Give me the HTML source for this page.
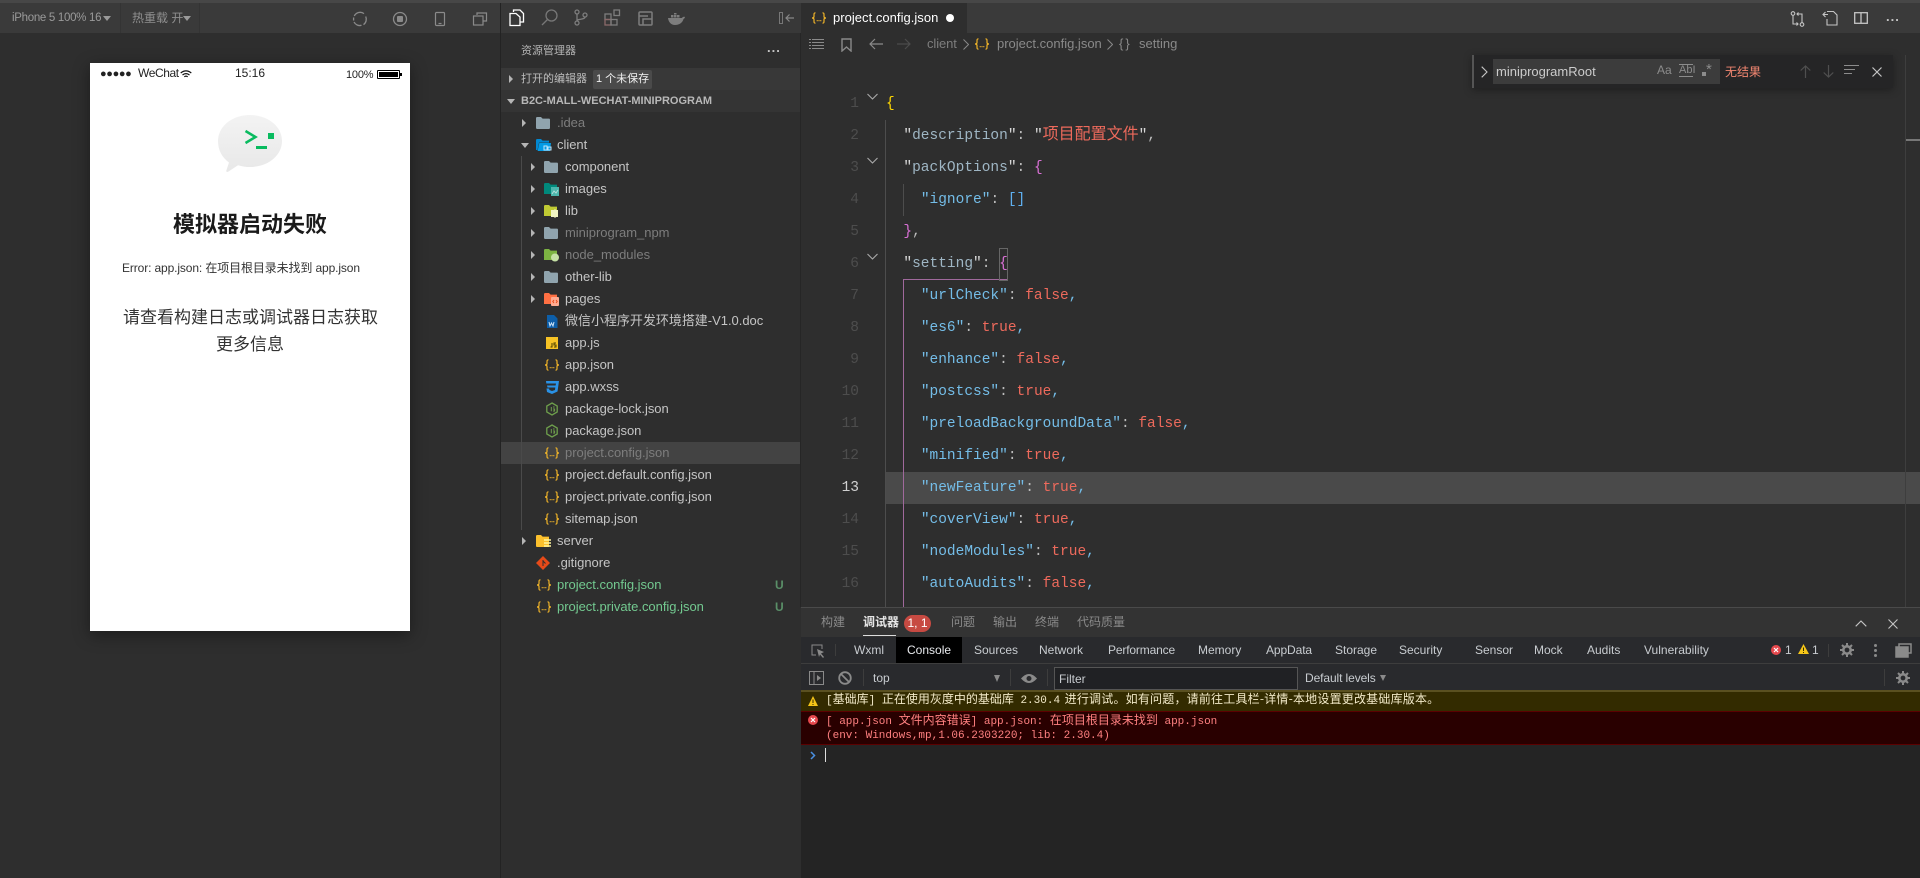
<!DOCTYPE html>
<html><head><meta charset="utf-8"><style>
html,body{margin:0;padding:0;width:1920px;height:878px;overflow:hidden;background:#2e2e2e}
body{position:relative;font-family:"Liberation Sans","Noto Sans CJK SC",sans-serif;font-size:13px;color:#c5c5c5}
div,span.t,svg.p{position:absolute}
.t{position:absolute;white-space:nowrap}
.r{position:absolute;left:501px;width:299px;height:22px;line-height:22px}
.r span{position:absolute;white-space:nowrap;top:0;letter-spacing:-.02px}
.r svg{position:absolute;top:5px}
.r .a{position:absolute;top:7px;width:0;height:0;border-left:4px solid #b5b5b5;border-top:4px solid transparent;border-bottom:4px solid transparent}
.l1 .a{left:21px}.l1 svg{left:35px}.l1 span{left:56px}
.l2 .a{left:30px}.l2 svg{left:43px}.l2 span{left:64px}
.dim{color:#7d7d7d}
.g{color:#73c990}
.ln{position:absolute;left:810px;width:49px;text-align:right;height:32px;font:14.5px/32px "Liberation Mono",monospace;color:#4d4d4d}
.c{position:absolute;left:886px;height:32px;white-space:pre;font:14.5px/32px "Liberation Mono","Noto Sans CJK SC",monospace;color:#bdbdbd}
.k{color:#74bde8}.k1{color:#9fb6c4}.v{color:#ee6a5c}.q{color:#d8d8d8}
.dt{position:absolute;top:637px;height:26px;line-height:27px;font-size:12px;color:#c8ccd0;white-space:nowrap}
.pt{position:absolute;top:607px;height:30px;line-height:30px;font-size:12px;color:#8a8a8a;white-space:nowrap}
.con{position:absolute;left:826px;white-space:pre;font:11px/13px "Liberation Mono","Noto Sans CJK SC",monospace}
.con b{font-weight:400;font-size:12px;line-height:0;font-family:"Noto Sans CJK SC",sans-serif}
svg{display:block}
</style></head><body>
<svg width="0" height="0" style="position:absolute"><defs>
<symbol id="j" viewBox="0 0 16 12"><g fill="none" stroke="#f0b429" stroke-width="1.2"><path d="M4.5 .8C3 .8 3 1.6 3 3v1.5C3 5.6 2.4 6 1 6c1.4 0 2 .4 2 1.5V9c0 1.4 0 2.2 1.5 2.2"/><path d="M11.5 .8C13 .8 13 1.6 13 3v1.5c0 1.1.6 1.5 2 1.5-1.4 0-2 .4-2 1.5V9c0 1.4 0 2.2-1.5 2.2"/></g><path fill="#f0b429" d="M5.7 8h1v1.2h-1zM7.5 8h1v1.2h-1zM9.3 8h1v1.2h-1z"/></symbol>
<symbol id="f" viewBox="0 0 14 12"><path d="M0 1.2Q0 0 1.2 0H5l1.6 1.6H13Q14 1.6 14 2.8V10.8Q14 12 13 12H1Q0 12 0 10.8z"/></symbol>
<symbol id="n" viewBox="0 0 14 14"><path d="M7 1l5.2 3v6L7 13 1.8 10V4z" fill="none" stroke="#6e9f4c" stroke-width="1.3"/><path d="M6.3 5v4.2M8 5h1.6M8 7h1.6v2H8" fill="none" stroke="#6e9f4c"/></symbol>
</defs></svg>

<!-- top strip -->
<div style="left:0;top:0;width:1920px;height:3px;background:#474747"></div>
<!-- simulator toolbar -->
<div style="left:0;top:3px;width:500px;height:30px;background:#3a3a3a"></div>
<div style="left:120px;top:3px;width:1px;height:30px;background:#343434"></div>
<div style="left:199px;top:3px;width:1px;height:30px;background:#343434"></div>
<span class="t" style="left:12px;top:9px;font-size:11.5px;line-height:18px;color:#9a9a9a;letter-spacing:-.3px">iPhone 5 100% 16</span>
<div style="left:103px;top:16px;border-top:5px solid #999;border-left:4px solid transparent;border-right:4px solid transparent"></div>
<span class="t" style="left:132px;top:9px;font-size:12px;line-height:18px;color:#8f8f8f">热重载 开</span>
<div style="left:183px;top:16px;border-top:5px solid #999;border-left:4px solid transparent;border-right:4px solid transparent"></div>
<svg class="p" style="left:352px;top:11px" width="16" height="16" viewBox="0 0 16 16" fill="none" stroke="#8a8a8a" stroke-width="1.3"><path d="M2.3 5A6.5 6.5 0 0 1 12 2.6M13.7 5.5A6.5 6.5 0 0 1 11.5 13.6M9.5 14.3A6.5 6.5 0 0 1 2 11M1.6 9.5V6.5"/></svg>
<svg class="p" style="left:392px;top:11px" width="16" height="16" viewBox="0 0 16 16"><circle cx="8" cy="8" r="6.5" fill="none" stroke="#8a8a8a" stroke-width="1.3"/><rect x="5" y="5" width="6" height="6" rx="1" fill="#8a8a8a"/></svg>
<svg class="p" style="left:434px;top:11px" width="12" height="16" viewBox="0 0 12 16" fill="none" stroke="#8a8a8a" stroke-width="1.2"><rect x="1.5" y="1.5" width="9" height="13" rx="1"/><path d="M4.5 12.5h3"/></svg>
<svg class="p" style="left:472px;top:11px" width="16" height="16" viewBox="0 0 16 16" fill="none" stroke="#8a8a8a" stroke-width="1.2"><path d="M5 4V2h9.500v8H11"/><rect x="1.500" y="5" width="9.500" height="9"/></svg>

<!-- phone -->
<div style="left:90px;top:63px;width:320px;height:568px;background:#fff;box-shadow:0 4px 16px rgba(0,0,0,.4)"></div>
<span class="t" style="left:100px;top:68px;font-size:11px;line-height:12px;color:#222;letter-spacing:-.35px">●●●●●</span>
<span class="t" style="left:138px;top:66px;font-size:12px;line-height:15px;color:#222;letter-spacing:-.4px">WeChat</span>
<svg class="p" style="left:180px;top:70px" width="12" height="9" viewBox="0 0 12 9" fill="none" stroke="#111" stroke-width="1.200"><path d="M.7 3Q6-1.200 11.300 3M2.500 5Q6 2.300 9.500 5M4.300 6.800Q6 5.500 7.700 6.800"/></svg>
<span class="t" style="left:235px;top:66px;font-size:12px;line-height:15px;color:#222">15:16</span>
<span class="t" style="left:346px;top:68px;font-size:11px;line-height:15px;color:#222;letter-spacing:-.2px">100%</span>
<div style="left:377px;top:70px;width:21px;height:7px;border:1px solid #000;border-radius:1px;padding:0"></div>
<div style="left:379px;top:72px;width:19px;height:5px;background:#000"></div>
<div style="left:400px;top:73px;width:2px;height:3px;background:#000"></div>
<svg class="p" style="left:218px;top:115px" width="64" height="57" viewBox="0 0 64 57"><defs><linearGradient id="bg" x1="0" y1="0" x2="0" y2="1"><stop offset="0" stop-color="#f3f3f3"/><stop offset="1" stop-color="#e8e8e8"/></linearGradient></defs><path d="M32 0C50 0 64 11.500 64 26S50 52 32 52c-4 0-8-.6-12-1.800L10.500 56.500c-1.500 1-2.800.3-2-1.500L11 47.500C4 42.500 0 35 0 26 0 11.500 14 0 32 0z" fill="url(#bg)"/><path d="M27.500 16l10 6-10 6" fill="none" stroke="#09bb5f" stroke-width="2.500"/><rect x="38" y="31" width="11" height="3" fill="#09bb5f"/><rect x="50" y="18" width="6" height="6" fill="#09bb5f"/></svg>
<span class="t" style="left:173px;top:210px;font-size:22px;line-height:30px;font-weight:700;color:#1a1a1a">模拟器启动失败</span>
<span class="t" style="left:122px;top:259px;font-size:12px;line-height:18px;color:#333;letter-spacing:-.12px">Error: app.json: 在项目根目录未找到 app.json</span>
<span class="t" style="left:123px;top:304px;font-size:17px;line-height:27px;color:#333">请查看构建日志或调试器日志获取</span>
<span class="t" style="left:216px;top:331px;font-size:17px;line-height:27px;color:#333">更多信息</span>

<!-- dividers -->
<div style="left:500px;top:3px;width:1px;height:875px;background:#232323"></div>
<div style="left:800px;top:33px;width:1px;height:574px;background:#262626"></div>

<!-- activity bar -->
<div style="left:501px;top:3px;width:300px;height:30px;background:#383838"></div>
<svg class="p" style="left:509px;top:9px" width="16" height="18" viewBox="0 0 16 18" fill="none" stroke="#fff" stroke-width="1.300"><path d="M4.500 3V1h6.500l3.500 3.500V13h-3.500"/><path d="M1 4.500h6l4 3.500V16.500H1z"/></svg>
<svg class="p" style="left:541px;top:9px" width="17" height="17" viewBox="0 0 17 17" fill="none" stroke="#777" stroke-width="1.300"><circle cx="10.500" cy="6.500" r="5.500"/><path d="M6.500 10.500L1 16"/></svg>
<svg class="p" style="left:574px;top:9px" width="14" height="17" viewBox="0 0 14 17" fill="none" stroke="#7d7d7d" stroke-width="1.300"><circle cx="3" cy="3" r="2"/><circle cx="3" cy="14" r="2"/><circle cx="11" cy="6" r="2"/><path d="M3 5v7M11 8c0 3-8 1.500-8 4"/></svg>
<svg class="p" style="left:604px;top:9px" width="17" height="17" viewBox="0 0 17 17" fill="none" stroke="#7d7d7d" stroke-width="1.300"><rect x="1" y="5" width="6" height="5.500"/><rect x="1" y="10.500" width="6" height="5.500" stroke="#8a6a6a"/><rect x="7" y="10.500" width="6" height="5.500"/><rect x="10" y="1" width="5.500" height="5.500"/></svg>
<svg class="p" style="left:638px;top:11px" width="15" height="15" viewBox="0 0 15 15" fill="none" stroke="#7d7d7d" stroke-width="1.500"><rect x="1" y="1" width="13" height="13" rx="1"/><path d="M1 5h9M14 8H5v6"/></svg>
<svg class="p" style="left:668px;top:13px" width="18" height="12" viewBox="0 0 18 12"><path fill="#7d7d7d" d="M0 5h14c.5-1 1.500-1.500 3-1-.2 1-.7 1.500-1.500 2C14.500 10 11 12 7 12 3 12 .5 9 0 5z"/><path fill="#7d7d7d" d="M3 2h2.500v2.500H3zM6 2h2.500v2.500H6zM6-.5h2.500V1.500H6zM9 2h2.500v2.500H9z"/></svg>
<div style="left:779px;top:12px;width:4px;height:12px;border:1px solid #777;box-sizing:border-box"></div>
<svg class="p" style="left:785px;top:13px" width="9" height="10" viewBox="0 0 9 10" fill="none" stroke="#888" stroke-width="1.200"><path d="M9 5H1M4.500 1.500L1 5l3.500 3.500"/></svg>

<!-- sidebar header -->
<span class="t" style="left:521px;top:42px;font-size:11px;line-height:18px;color:#b5b5b5">资源管理器</span>
<span class="t" style="left:767px;top:39px;font-size:13px;line-height:18px;color:#c5c5c5;letter-spacing:1px;font-weight:700">...</span>
<div style="left:501px;top:68px;width:299px;height:22px;background:#383838"></div>
<div style="left:501px;top:90px;width:299px;height:22px;background:#343434"></div>
<div class="a" style="left:509px;top:75px;width:0;height:0;border-left:4px solid #b5b5b5;border-top:4px solid transparent;border-bottom:4px solid transparent"></div>
<span class="t" style="left:521px;top:70px;font-size:11px;line-height:18px;color:#bdbdbd">打开的编辑器</span>
<div style="left:593px;top:70px;width:59px;height:19px;background:#4a4a4a;border-radius:2px"></div>
<span class="t" style="left:596px;top:70px;font-size:11px;line-height:19px;color:#f0f0f0">1 个未保存</span>
<div style="left:507px;top:99px;width:0;height:0;border-top:5px solid #b5b5b5;border-left:4px solid transparent;border-right:4px solid transparent"></div>
<span class="t" style="left:521px;top:92px;font-size:11px;line-height:18px;color:#b8b8b8;font-weight:700">B2C-MALL-WECHAT-MINIPROGRAM</span>

<!-- tree -->
<div style="left:501px;top:442px;width:299px;height:22px;background:#434343"></div>
<div style="left:521px;top:156px;width:1px;height:374px;background:#4a4a4a"></div>

<div class="r l1" style="top:112px"><i class="a"></i><svg width="14" height="12" fill="#90a4ae"><use href="#f"/></svg><span class="dim">.idea</span></div>
<div class="r l1" style="top:134px"><i class="a" style="border:0;border-top:5px solid #b5b5b5;border-left:4px solid transparent;border-right:4px solid transparent;top:9px;left:20px"></i><svg width="16" height="13" viewBox="0 0 16 13"><path fill="#0288d1" d="M0 1.200Q0 0 1.200 0H5l1.600 1.600H13v2H3L1.500 11H0z"/><path fill="#039be5" d="M3.300 4H15l-1 8H1.600z"/><rect x="8" y="7" width="3" height="4" fill="none" stroke="#bfe6fb"/><rect x="12" y="8" width="3" height="3" fill="none" stroke="#bfe6fb"/></svg><span>client</span></div>
<div class="r l2" style="top:156px"><i class="a"></i><svg width="14" height="12" fill="#90a4ae"><use href="#f"/></svg><span>component</span></div>
<div class="r l2" style="top:178px"><i class="a"></i><svg width="15" height="13" viewBox="0 0 15 13"><g fill="#00897b"><path d="M0 1.200Q0 0 1.200 0H5l1.600 1.600H13V11H0z"/></g><rect x="7" y="4" width="8" height="9" fill="#4db6ac"/><path d="M8 11l2-3 2 2 2-3" stroke="#b2dfdb" fill="none"/></svg><span>images</span></div>
<div class="r l2" style="top:200px"><i class="a"></i><svg width="15" height="13" viewBox="0 0 15 13"><path fill="#c0ca33" d="M0 1.200Q0 0 1.200 0H5l1.600 1.600H13V11H0z"/><path fill="#f0f4c3" d="M7 5h3l1-1 1 1h2v7h-2l-1 1-1-1H7z"/></svg><span>lib</span></div>
<div class="r l2" style="top:222px"><i class="a"></i><svg width="14" height="12" fill="#90a4ae"><use href="#f"/></svg><span class="dim">miniprogram_npm</span></div>
<div class="r l2" style="top:244px"><i class="a"></i><svg width="15" height="13" viewBox="0 0 15 13"><path fill="#7cb342" d="M0 1.200Q0 0 1.200 0H5l1.600 1.600H13V11H0z"/><circle cx="11" cy="8.500" r="4" fill="#c5e1a5"/></svg><span class="dim">node_modules</span></div>
<div class="r l2" style="top:266px"><i class="a"></i><svg width="14" height="12" fill="#90a4ae"><use href="#f"/></svg><span>other-lib</span></div>
<div class="r l2" style="top:288px"><i class="a"></i><svg width="15" height="13" viewBox="0 0 15 13"><path fill="#ff7043" d="M0 1.200Q0 0 1.200 0H5l1.600 1.600H13V11H0z"/><rect x="7" y="4" width="8" height="9" rx="1" fill="#ffab91"/><path d="M10 7L8.800 8.500 10 10M12 7l1.200 1.500L12 10" stroke="#e64a19" fill="none"/></svg><span>pages</span></div>
<div class="r l2" style="top:310px"><svg width="12" height="13" viewBox="0 0 12 13" style="left:45px"><path fill="#0d5ea8" d="M1 0h7l3.500 3.500V13H1z"/><path d="M3 7l1 4 1.500-3L7 11l1-4" stroke="#cfe4f7" fill="none"/></svg><span>微信小程序开发环境搭建-V1.0.doc</span></div>
<div class="r l2" style="top:332px"><svg width="12" height="12" viewBox="0 0 12 12" style="left:45px"><rect width="12" height="12" fill="#f7c325"/><path d="M6 6v4H4.500M10 6H8v2h2v2H8" stroke="#4a3c00" fill="none"/></svg><span>app.js</span></div>
<div class="r l2" style="top:354px"><svg width="16" height="12" style="left:43px"><use href="#j"/></svg><span>app.json</span></div>
<div class="r l2" style="top:376px"><svg width="14" height="13" viewBox="0 0 14 13" style="left:44px"><path fill="#2a92e6" d="M1 0h13l-1.500 10.500L7 13l-5-2-.5-3.500h2.700l.2 1.500L7 10l3-1 .3-2.500H2.500L2 4.500h8.600L11 2.500H1.300z"/></svg><span>app.wxss</span></div>
<div class="r l2" style="top:398px"><svg width="14" height="14" style="left:44px;top:4px"><use href="#n"/></svg><span>package-lock.json</span></div>
<div class="r l2" style="top:420px"><svg width="14" height="14" style="left:44px;top:4px"><use href="#n"/></svg><span>package.json</span></div>
<div class="r l2" style="top:442px"><svg width="16" height="12" style="left:43px"><use href="#j"/></svg><span class="dim">project.config.json</span></div>
<div class="r l2" style="top:464px"><svg width="16" height="12" style="left:43px"><use href="#j"/></svg><span>project.default.config.json</span></div>
<div class="r l2" style="top:486px"><svg width="16" height="12" style="left:43px"><use href="#j"/></svg><span>project.private.config.json</span></div>
<div class="r l2" style="top:508px"><svg width="16" height="12" style="left:43px"><use href="#j"/></svg><span>sitemap.json</span></div>
<div class="r l1" style="top:530px"><i class="a"></i><svg width="15" height="12" viewBox="0 0 15 12"><path fill="#fbc02d" d="M0 1.200Q0 0 1.200 0H5l1.600 1.600H13V12H1Q0 12 0 11z"/><path d="M8 5h7M8 8h7M8 11h7" stroke="#fff59d" stroke-width="1.500"/></svg><span>server</span></div>
<div class="r l1" style="top:552px"><svg width="14" height="14" viewBox="0 0 14 14" style="top:4px"><path fill="#e64a19" d="M7 0l7 7-7 7-7-7z"/><path d="M7 4v6M7 5l2.500 2.500" stroke="#2e2e2e" fill="none"/></svg><span>.gitignore</span></div>
<div class="r l1" style="top:574px"><svg width="16" height="12" style="left:35px"><use href="#j"/></svg><span class="g">project.config.json</span><span style="left:274px;color:#5a8f68;font-weight:700;font-size:12px">U</span></div>
<div class="r l1" style="top:596px"><svg width="16" height="12" style="left:35px"><use href="#j"/></svg><span class="g">project.private.config.json</span><span style="left:274px;color:#5a8f68;font-weight:700;font-size:12px">U</span></div>

<!-- editor tab bar -->
<div style="left:801px;top:3px;width:1119px;height:30px;background:#3a3a3a"></div>
<div style="left:801px;top:3px;width:166px;height:30px;background:#2e2e2e"></div>
<svg class="p" style="left:811px;top:12px" width="16" height="12"><use href="#j"/></svg>
<span class="t" style="left:833px;top:9px;font-size:13px;line-height:18px;color:#fff;letter-spacing:.03px">project.config.json</span>
<div style="left:946px;top:14px;width:8px;height:8px;border-radius:50%;background:#fff"></div>
<svg class="p" style="left:1790px;top:11px" width="15" height="16" viewBox="0 0 15 16" fill="none" stroke="#c5c5c5" stroke-width="1.100"><circle cx="3" cy="2.500" r="1.800"/><circle cx="12" cy="13.500" r="1.800"/><path d="M3 4.500V13h5M6.500 11.500L8 13l-1.500 1.500M12 11.500V3H7M8.500 1.500L7 3l1.500 1.500"/></svg>
<svg class="p" style="left:1822px;top:10px" width="16" height="16" viewBox="0 0 16 16" fill="none" stroke="#c5c5c5" stroke-width="1.100"><path d="M5 1.500h6.500L15 5v10H5V9"/><path d="M1 4.500h5M3.500 2L1 4.500 3.500 7"/></svg>
<svg class="p" style="left:1854px;top:11px" width="14" height="14" viewBox="0 0 14 14" fill="none" stroke="#c5c5c5" stroke-width="1.300"><rect x=".7" y="1.700" width="12.600" height="10.600"/><path d="M7 1.700v10.600"/></svg>
<span class="t" style="left:1886px;top:8px;font-size:13px;line-height:18px;color:#c5c5c5;letter-spacing:1px;font-weight:700">...</span>

<!-- breadcrumb -->
<svg class="p" style="left:809px;top:39px" width="15" height="11" viewBox="0 0 15 11" stroke="#8a8a8a"><path d="M0 .5h2M3 .5h12M0 3.500h2M3 3.500h12M0 6.500h2M3 6.500h12M0 9.500h2M3 9.500h12"/></svg>
<svg class="p" style="left:841px;top:38px" width="11" height="14" viewBox="0 0 11 14" fill="none" stroke="#8a8a8a" stroke-width="1.400"><path d="M1 1h9v12L5.500 9 1 13z"/></svg>
<svg class="p" style="left:869px;top:38px" width="14" height="12" viewBox="0 0 14 12" fill="none" stroke="#8a8a8a" stroke-width="1.200"><path d="M14 6H1M6 1L1 6l5 5"/></svg>
<svg class="p" style="left:897px;top:38px" width="14" height="12" viewBox="0 0 14 12" fill="none" stroke="#4c4c4c" stroke-width="1.200"><path d="M0 6h13M8 1l5 5-5 5"/></svg>
<span class="t" style="left:927px;top:35px;font-size:13px;line-height:18px;color:#7d7d7d;letter-spacing:-.1px">client</span>
<svg class="p" style="left:963px;top:39px" width="6" height="11" fill="none" stroke="#888"><path d="M.5.500l5 5-5 5"/></svg>
<svg class="p" style="left:974px;top:38px" width="16" height="12"><use href="#j"/></svg>
<span class="t" style="left:997px;top:35px;font-size:13px;line-height:18px;color:#8a8a8a">project.config.json</span>
<svg class="p" style="left:1107px;top:39px" width="6" height="11" fill="none" stroke="#888"><path d="M.5.500l5 5-5 5"/></svg>
<span class="t" style="left:1119px;top:35px;font-size:13px;line-height:18px;color:#8a8a8a;letter-spacing:2px">{}</span>
<span class="t" style="left:1139px;top:35px;font-size:13px;line-height:18px;color:#8a8a8a">setting</span>

<!-- editor -->
<div style="left:885px;top:472px;width:1035px;height:32px;background:#4a4a4a"></div>
<div style="left:885px;top:120px;width:1px;height:487px;background:#4d4d4d"></div>
<div style="left:903px;top:184px;width:1px;height:32px;background:#4d4d4d"></div>
<div style="left:903px;top:279px;width:1px;height:328px;background:#a0699c"></div>
<div style="left:903px;top:279px;width:104px;height:1px;background:#a0699c"></div>
<div style="left:999px;top:248px;width:7px;height:31px;border:1px solid #666"></div>
<svg class="p" style="left:867px;top:93px" width="11" height="7" fill="none" stroke="#aaa" stroke-width="1.100"><path d="M.5 1L5.500 6l5-5"/></svg>
<svg class="p" style="left:867px;top:157px" width="11" height="7" fill="none" stroke="#aaa" stroke-width="1.100"><path d="M.5 1L5.500 6l5-5"/></svg>
<svg class="p" style="left:867px;top:253px" width="11" height="7" fill="none" stroke="#aaa" stroke-width="1.100"><path d="M.5 1L5.500 6l5-5"/></svg>

<div class="ln" style="top:88px">1</div><div class="ln" style="top:120px">2</div><div class="ln" style="top:152px">3</div><div class="ln" style="top:184px">4</div><div class="ln" style="top:216px">5</div><div class="ln" style="top:248px">6</div><div class="ln" style="top:280px">7</div><div class="ln" style="top:312px">8</div><div class="ln" style="top:344px">9</div><div class="ln" style="top:376px">10</div><div class="ln" style="top:408px">11</div><div class="ln" style="top:440px">12</div><div class="ln" style="top:472px;color:#d0d0d0">13</div><div class="ln" style="top:504px">14</div><div class="ln" style="top:536px">15</div><div class="ln" style="top:568px">16</div>

<div class="c" style="top:88px"><span style="color:#ffd700">{</span></div>
<div class="c" style="top:120px">  <span class="q">"</span><span class="k1">description</span><span class="q">"</span>: <span class="q">"</span><span class="v" style="font-family:'Noto Sans CJK SC',sans-serif;font-size:16px;line-height:0">项目配置文件</span><span class="q">"</span>,</div>
<div class="c" style="top:152px">  <span class="q">"</span><span class="k1">packOptions</span><span class="q">"</span>: <span style="color:#da70d6">{</span></div>
<div class="c" style="top:184px">    <span class="k">"ignore"</span>: <span style="color:#5fb0f0">[]</span></div>
<div class="c" style="top:216px">  <span style="color:#da70d6">}</span>,</div>
<div class="c" style="top:248px">  <span class="q">"</span><span class="k1">setting</span><span class="q">"</span>: <span style="color:#da70d6">{</span></div>
<div class="c" style="top:280px">    <span class="k">"urlCheck"</span>: <span class="v">false</span><span class="k">,</span></div>
<div class="c" style="top:312px">    <span class="k">"es6"</span>: <span class="v">true</span><span class="k">,</span></div>
<div class="c" style="top:344px">    <span class="k">"enhance"</span>: <span class="v">false</span><span class="k">,</span></div>
<div class="c" style="top:376px">    <span class="k">"postcss"</span>: <span class="v">true</span><span class="k">,</span></div>
<div class="c" style="top:408px">    <span class="k">"preloadBackgroundData"</span>: <span class="v">false</span><span class="k">,</span></div>
<div class="c" style="top:440px">    <span class="k">"minified"</span>: <span class="v">true</span><span class="k">,</span></div>
<div class="c" style="top:472px">    <span class="k">"newFeature"</span>: <span class="v">true</span><span class="k">,</span></div>
<div class="c" style="top:504px">    <span class="k">"coverView"</span>: <span class="v">true</span><span class="k">,</span></div>
<div class="c" style="top:536px">    <span class="k">"nodeModules"</span>: <span class="v">true</span><span class="k">,</span></div>
<div class="c" style="top:568px">    <span class="k">"autoAudits"</span>: <span class="v">false</span><span class="k">,</span></div>

<!-- scrollbar -->
<div style="left:1905px;top:55px;width:1px;height:552px;background:#3e3e3e"></div>
<div style="left:1906px;top:139px;width:14px;height:2px;background:#777"></div>

<!-- find widget -->
<div style="left:1472px;top:55px;width:421px;height:33px;background:#252526;box-shadow:0 2px 8px rgba(0,0,0,.35)"></div>
<div style="left:1472px;top:55px;width:2px;height:33px;background:#555"></div>
<svg class="p" style="left:1481px;top:66px" width="7" height="12" fill="none" stroke="#c5c5c5" stroke-width="1.100"><path d="M.7.700l5.300 5.300-5.300 5.300"/></svg>
<div style="left:1493px;top:59px;width:227px;height:25px;background:#3c3c3c"></div>
<span class="t" style="left:1496px;top:63px;font-size:13px;line-height:18px;color:#ccc">miniprogramRoot</span>
<span class="t" style="left:1657px;top:61px;font-size:12px;line-height:18px;color:#8c8c8c">Aa</span>
<div style="left:1679px;top:64px;width:14px;height:11px;border-top:1px solid #8c8c8c;border-bottom:1px solid #8c8c8c"></div>
<span class="t" style="left:1679px;top:61px;font-size:11px;line-height:18px;color:#8c8c8c">AbI</span>
<div style="left:1702px;top:72px;width:4px;height:4px;background:#8c8c8c"></div>
<span class="t" style="left:1706px;top:61px;font-size:15px;line-height:18px;color:#8c8c8c">*</span>
<span class="t" style="left:1725px;top:63px;font-size:12px;line-height:18px;color:#f48771">无结果</span>
<svg class="p" style="left:1800px;top:65px" width="11" height="13" fill="none" stroke="#4f4f4f" stroke-width="1.200"><path d="M5.500 13V1M.7 5.500L5.500.9l4.800 4.600"/></svg>
<svg class="p" style="left:1823px;top:65px" width="11" height="13" fill="none" stroke="#4f4f4f" stroke-width="1.200"><path d="M5.500 0v12M.7 7.500l4.800 4.600 4.800-4.600"/></svg>
<svg class="p" style="left:1844px;top:65px" width="16" height="10" stroke="#8c8c8c"><path d="M0 .5h15M0 4.500h11M0 8.500h8"/></svg>
<svg class="p" style="left:1872px;top:67px" width="10" height="10" fill="none" stroke="#c5c5c5" stroke-width="1.200"><path d="M.5.500l9 9M9.500.5l-9 9"/></svg>

<!-- bottom panel -->
<div style="left:801px;top:607px;width:1119px;height:271px;background:#242424"></div>
<div style="left:801px;top:607px;width:1119px;height:1px;background:#4a4a4a"></div>
<div style="left:801px;top:608px;width:1119px;height:29px;background:#333"></div>
<span class="pt" style="left:821px">构建</span>
<span class="pt" style="left:863px;color:#e6e6e6;font-weight:700">调试器</span>
<div style="left:863px;top:635px;width:33px;height:1px;background:#ddd"></div>
<div style="left:904px;top:615px;width:27px;height:17px;border-radius:9px;background:#c74a42;color:#fff;font-size:12px;line-height:17px;text-align:center">1, 1</div>
<span class="pt" style="left:951px">问题</span>
<span class="pt" style="left:993px">输出</span>
<span class="pt" style="left:1035px">终端</span>
<span class="pt" style="left:1077px">代码质量</span>
<svg class="p" style="left:1855px;top:620px" width="12" height="7" fill="none" stroke="#c5c5c5" stroke-width="1.100"><path d="M.7 6.300L6 1l5.300 5.300"/></svg>
<svg class="p" style="left:1888px;top:619px" width="10" height="10" fill="none" stroke="#c5c5c5" stroke-width="1.100"><path d="M.5.500l9 9M9.500.5l-9 9"/></svg>

<!-- devtools tabs -->
<div style="left:801px;top:637px;width:1119px;height:53px;background:#292a2d"></div>
<div style="left:801px;top:663px;width:1119px;height:1px;background:#3d3d3d"></div>
<div style="left:896px;top:637px;width:66px;height:26px;background:#000"></div>
<svg class="p" style="left:811px;top:644px" width="14" height="14" viewBox="0 0 14 14"><path d="M5 11H1V1h10v4" fill="none" stroke="#8a8a8a"/><path d="M6 5l7 3-3 1.500L13 13l-1 1-3-3.500L8 13z" fill="#8a8a8a"/></svg>
<div style="left:835px;top:644px;width:1px;height:12px;background:#3d3d3d"></div>
<span class="dt" style="left:854px">Wxml</span>
<span class="dt" style="left:907px;color:#e8eaed">Console</span>
<span class="dt" style="left:974px">Sources</span>
<span class="dt" style="left:1039px">Network</span>
<span class="dt" style="left:1108px;letter-spacing:-.15px">Performance</span>
<span class="dt" style="left:1198px">Memory</span>
<span class="dt" style="left:1266px;letter-spacing:-.1px">AppData</span>
<span class="dt" style="left:1335px">Storage</span>
<span class="dt" style="left:1399px">Security</span>
<span class="dt" style="left:1475px">Sensor</span>
<span class="dt" style="left:1534px">Mock</span>
<span class="dt" style="left:1587px">Audits</span>
<span class="dt" style="left:1644px">Vulnerability</span>
<svg class="p" style="left:1771px;top:645px" width="10" height="10" viewBox="0 0 10 10"><circle cx="5" cy="5" r="5" fill="#e5484d"/><path d="M3 3l4 4M7 3L3 7" stroke="#fff" stroke-width="1.200"/></svg>
<span class="t" style="left:1785px;top:642px;font-size:12px;line-height:16px;color:#c8ccd0">1</span>
<svg class="p" style="left:1798px;top:644px" width="11" height="10" viewBox="0 0 11 10"><path d="M5.500 0L11 10H0z" fill="#f5c518"/><path d="M5.500 3.500v3.500M5.500 8v1" stroke="#332b00"/></svg>
<span class="t" style="left:1812px;top:642px;font-size:12px;line-height:16px;color:#c8ccd0">1</span>
<div style="left:1828px;top:644px;width:1px;height:13px;background:#3d3d3d"></div>
<svg class="p" style="left:1840px;top:643px" width="14" height="14" viewBox="0 0 14 14"><circle cx="7" cy="7" r="3.700" fill="none" stroke="#8a8a8a" stroke-width="2.600"/><path d="M7 0v3M7 11v3M0 7h3M11 7h3M2 2l2 2M10 10l2 2M12 2l-2 2M2 12l2-2" stroke="#8a8a8a" stroke-width="2"/></svg>
<div style="left:1874px;top:644px;width:3px;height:3px;background:#8a8a8a;box-shadow:0 5px 0 #8a8a8a,0 10px 0 #8a8a8a;border-radius:50%"></div>
<svg class="p" style="left:1895px;top:643px" width="17" height="15" viewBox="0 0 17 15" fill="none" stroke="#8a8a8a" stroke-width="1.500"><path d="M4 4V1h12v9h-3"/><rect x="1" y="4" width="12" height="10" fill="#8a8a8a"/></svg>

<!-- filter row -->
<svg class="p" style="left:809px;top:671px" width="15" height="14" viewBox="0 0 15 14"><rect x=".5" y=".5" width="14" height="13" fill="none" stroke="#8a8a8a"/><path d="M5 .5v13" stroke="#8a8a8a"/><path d="M8 4l4 3-4 3z" fill="#8a8a8a"/></svg>
<svg class="p" style="left:838px;top:671px" width="14" height="14" viewBox="0 0 14 14" fill="none" stroke="#8a8a8a" stroke-width="1.800"><circle cx="7" cy="7" r="5.800"/><path d="M3 3l8 8"/></svg>
<div style="left:863px;top:669px;width:1px;height:17px;background:#3d3d3d"></div>
<span class="t" style="left:873px;top:670px;font-size:12px;line-height:16px;color:#c8ccd0">top</span>
<div style="left:994px;top:675px;border-top:7px solid #8a8a8a;border-left:3.500px solid transparent;border-right:3.500px solid transparent"></div>
<div style="left:1010px;top:669px;width:1px;height:17px;background:#3d3d3d"></div>
<svg class="p" style="left:1021px;top:673px" width="16" height="11" viewBox="0 0 16 11"><path d="M0 5.500Q8-3.500 16 5.500Q8 14.500 0 5.500z" fill="#8a8a8a"/><circle cx="8" cy="5.500" r="2.500" fill="#292a2d"/></svg>
<div style="left:1047px;top:669px;width:1px;height:17px;background:#3d3d3d"></div>
<div style="left:1054px;top:667px;width:242px;height:21px;background:#202124;border:1px solid #555"></div>
<span class="t" style="left:1059px;top:671px;font-size:12px;line-height:16px;color:#c8ccd0">Filter</span>
<span class="t" style="left:1305px;top:670px;font-size:12px;line-height:16px;color:#c8ccd0;letter-spacing:-.1px">Default levels</span>
<div style="left:1380px;top:675px;border-top:6px solid #8a8a8a;border-left:3.500px solid transparent;border-right:3.500px solid transparent"></div>
<div style="left:1884px;top:669px;width:1px;height:17px;background:#3d3d3d"></div>
<svg class="p" style="left:1896px;top:671px" width="14" height="14" viewBox="0 0 14 14"><circle cx="7" cy="7" r="3.700" fill="none" stroke="#8a8a8a" stroke-width="2.600"/><path d="M7 0v3M7 11v3M0 7h3M11 7h3M2 2l2 2M10 10l2 2M12 2l-2 2M2 12l2-2" stroke="#8a8a8a" stroke-width="2"/></svg>

<!-- console rows -->
<div style="left:801px;top:690px;width:1119px;height:21px;background:#332b00;border-top:2px solid #5a5020;box-sizing:border-box"></div>
<div style="left:801px;top:711px;width:1119px;height:34px;background:#290000;border-top:1px solid #5c0000;border-bottom:1px solid #5c0000;box-sizing:border-box"></div>
<svg class="p" style="left:808px;top:696px" width="10" height="10" viewBox="0 0 10 10"><path d="M5 0l5 10H0z" fill="#f5c518"/><path d="M5 3.500V7M5 8v1" stroke="#332b00"/></svg>
<svg class="p" style="left:808px;top:715px" width="10" height="10" viewBox="0 0 10 10"><circle cx="5" cy="5" r="5" fill="#e5484d"/><path d="M3 3l4 4M7 3L3 7" stroke="#fff" stroke-width="1.200"/></svg>
<div class="con" style="top:695px;color:#f2e9c8">[<b>基础库</b>] <b>正在使用灰度中的基础库</b> 2.30.4 <b style="margin-left:-2px;letter-spacing:.2px">进行调试。如有问题，请前往工具栏-详情-本地设置更改基础库版本。</b></div>
<div class="con" style="top:716px;color:#ff8080">[ app.json <b>文件内容错误</b>] app.json: <b>在项目根目录未找到</b> app.json</div>
<div class="con" style="top:730px;color:#ff8080">(env: Windows,mp,1.06.2303220; lib: 2.30.4)</div>
<svg class="p" style="left:810px;top:751px" width="6" height="9" fill="none" stroke="#4a90e2" stroke-width="1.500"><path d="M1 1l3.500 3.500L1 8"/></svg>
<div style="left:825px;top:748px;width:1px;height:14px;background:#ddd"></div>
</body></html>
